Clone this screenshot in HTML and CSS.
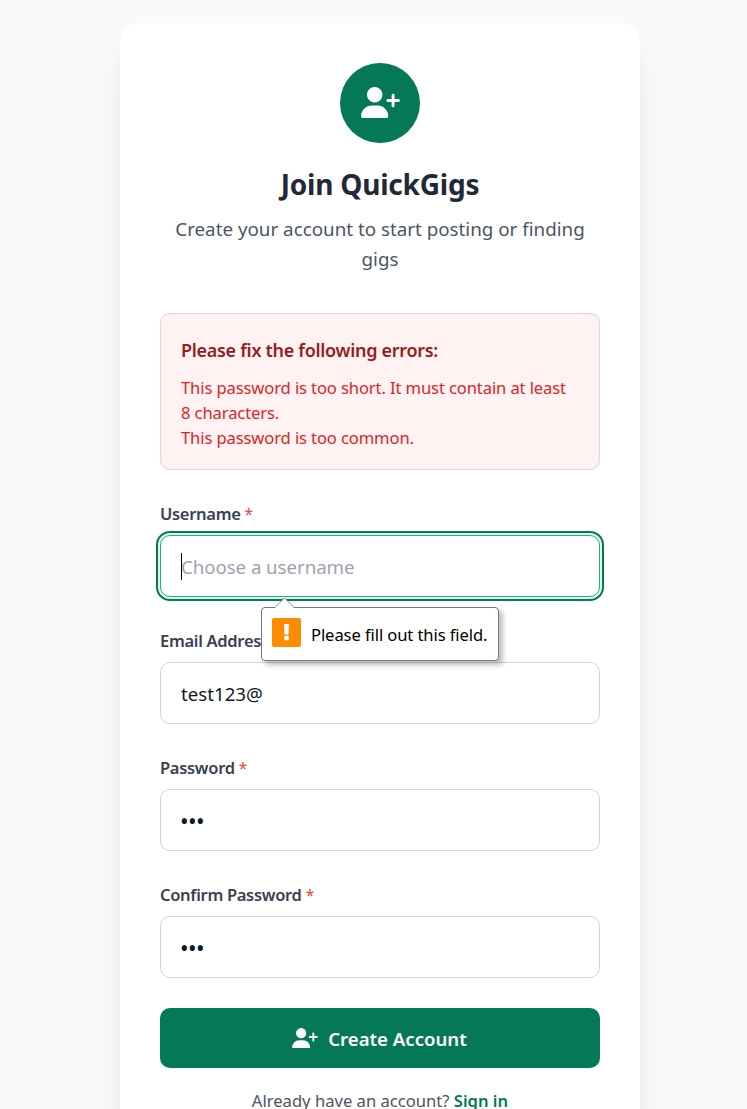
FILE: index.html
```html
<!DOCTYPE html>
<html lang="en">
<head>
<meta charset="utf-8">
<title>Join QuickGigs</title>
<link rel="stylesheet" href="styles.css">
</head>
<body>
<svg width="0" height="0" class="defs" aria-hidden="true">
  <symbol id="user-plus" viewBox="0 0 640 512"><path fill="currentColor" d="M96 128a128 128 0 1 1 256 0A128 128 0 1 1 96 128zM0 482.3C0 383.8 79.8 304 178.3 304l91.4 0C368.2 304 448 383.8 448 482.3c0 16.4-13.3 29.7-29.7 29.7L29.7 512C13.3 512 0 498.7 0 482.3zM504 312l0-64-64 0c-13.3 0-24-10.7-24-24s10.7-24 24-24l64 0 0-64c0-13.3 10.7-24 24-24s24 10.7 24 24l0 64 64 0c13.3 0 24 10.7 24 24s-10.7 24-24 24l-64 0 0 64c0 13.3-10.7 24-24 24s-24-10.7-24-24z"/></symbol>
</svg>
<main class="card">
  <header class="header">
    <div class="badge"><svg class="badge-icon"><use href="#user-plus"/></svg></div>
    <h1 class="title"><span>Join QuickGigs</span></h1>
    <p class="subtitle">Create your account to start posting or finding<br>gigs</p>
  </header>
  <section class="alert">
    <h2 class="alert-title">Please fix the following errors:</h2>
    <p class="alert-text">This password is too short. It must contain at least<br>8 characters.</p>
    <p class="alert-text">This password is too common.</p>
  </section>
  <form class="form">
    <div class="field">
      <div class="label">Username <span class="req">*</span></div>
      <div class="input focused"><span class="caret"></span><span class="placeholder">Choose a username</span></div>
      <div class="tooltip">
        <svg class="arrow" viewBox="0 0 22 11"><path d="M0.5 11 10.5 1 20.5 11" fill="#fff" stroke="#8a8a8a"/></svg>
        <svg class="warn" viewBox="0 0 29 29"><rect width="29" height="29" rx="2" fill="#ff8c00"/><path d="M12 6h5l-.5 10.5h-4z" fill="#fff"/><circle cx="14.5" cy="20" r="2.5" fill="#fff"/></svg>
        <span class="tip-text">Please fill out this field.</span>
      </div>
    </div>
    <div class="field">
      <div class="label">Email Address <span class="req">*</span></div>
      <div class="input"><span class="value">test123@</span></div>
    </div>
    <div class="field">
      <div class="label">Password <span class="req">*</span></div>
      <div class="input"><span class="dots">•••</span></div>
    </div>
    <div class="field">
      <div class="label">Confirm Password <span class="req">*</span></div>
      <div class="input"><span class="dots">•••</span></div>
    </div>
    <button class="submit" type="button"><svg class="submit-icon"><use href="#user-plus"/></svg><span>Create Account</span></button>
  </form>
  <p class="footer">Already have an account? <a class="link">Sign in</a></p>
</main>
</body>
</html>
```
FILE: styles.css
```css
* { box-sizing: border-box; }
html { height: 100%; overflow: hidden; }
body { margin: 0; height: 100%; overflow: hidden; background: #f8fafc; padding: 23px 0 0 120px; font-family: "Noto Sans", "Open Sans", sans-serif; color: #1f2937; }
h1, h2, p { margin: 0; }
.defs { position: absolute; }
.card { width: 520px; height: 1160px; padding: 40px; background: #fff; border-radius: 20px; box-shadow: 0 25px 31px -5px rgba(0, 0, 0, .1), 0 12px 12px -6px rgba(0, 0, 0, .04); }
.header { display: flex; flex-direction: column; align-items: center; text-align: center; white-space: nowrap; }
.badge { width: 80px; height: 80px; border-radius: 50%; background: #047857; color: #fff; display: flex; align-items: center; justify-content: center; }
.badge-icon { width: 39px; height: 31px; margin: -1px 0 0 0; }
.title { margin-top: 23px; font-size: 28px; line-height: 36px; font-weight: 700; letter-spacing: -.2px; }
.subtitle { margin-top: 12px; font-size: 18.8px; line-height: 30px; color: #4b5563; }
.alert { margin-top: 39px; height: 157px; padding: 21px 20px 0; border: 1px solid #fecaca; border-radius: 10px; background: #fef2f2; white-space: nowrap; }
.alert-title { font-size: 18px; line-height: 30px; font-weight: 600; color: #991b1b; margin-bottom: 10px; letter-spacing: -.3px; }
.alert-text { font-size: 16.6px; line-height: 25px; color: #dc2626; letter-spacing: -.12px; }
.form { margin-top: 31px; }
.field { position: relative; margin-bottom: 31px; }
.field:last-of-type { margin-bottom: 30px; }
.label { height: 25px; font-size: 16.5px; line-height: 25px; font-weight: 600; color: #374151; margin-bottom: 9px; letter-spacing: -.3px; }
.req { color: #ef4444; font-weight: 400; font-size: 15.5px; line-height: 1; }
.input { height: 62px; display: flex; align-items: center; padding: 1px 20px 0; border: 1px solid #d1d5db; border-radius: 10px; font-size: 18.7px; line-height: 30px; background: #fff; color: #111827; }
.focused { border-color: #10b981; outline: 2px solid #047857; outline-offset: 2px; box-shadow: 0 0 0 3px rgba(4, 120, 87, .1); }
.caret { width: 1px; height: 27px; background: #000; margin: -1px -1px 0 0; }
.placeholder { color: #9ca3af; letter-spacing: -.06px; }
.dots { font-size: 23px; letter-spacing: -.6px; margin-left: -1px; }
.tooltip { position: absolute; z-index: 2; left: 101px; top: 106px; width: 238px; height: 54px; display: flex; align-items: center; gap: 10px; padding-left: 10px; border: 1px solid #767676; border-radius: 4px; background: #fff; color: #000; white-space: nowrap; box-shadow: 4px 4px 5px rgba(0, 0, 0, .25); }
.arrow { position: absolute; left: 12px; top: -11px; width: 22px; height: 11px; }
.warn { width: 29px; height: 29px; flex: none; margin-top: -3px; }
.tip-text { font-size: 16.6px; line-height: 25px; letter-spacing: -.1px; }
.submit { width: 100%; height: 60px; display: flex; align-items: center; justify-content: center; gap: 10px; border: 0; border-radius: 10px; background: #047857; color: #fff; font: 600 18.6px/30px "Noto Sans", sans-serif; padding: 2px 1px 0 0; }
.submit-icon { width: 26px; height: 20.5px; margin-top: -2px; }
.footer { margin-top: 20px; text-align: center; font-size: 16.6px; line-height: 25px; color: #4b5563; white-space: nowrap; }
.link { color: #047857; font-weight: 600; }
```
